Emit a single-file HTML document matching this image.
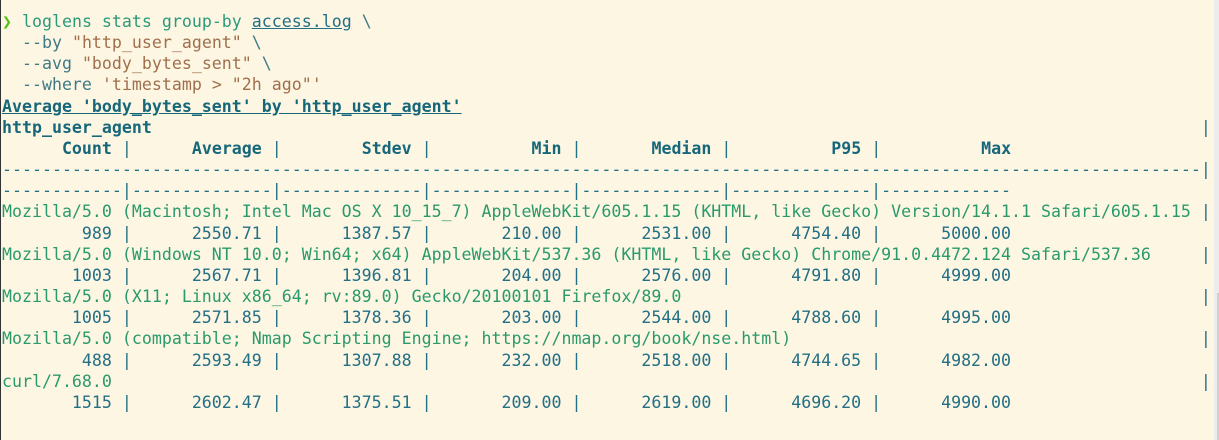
<!DOCTYPE html>
<html><head><meta charset="utf-8"><style>
html,body{margin:0;padding:0;}
body{width:1219px;height:440px;background:#fdf6e3;position:relative;overflow:hidden;border-left:1px solid #333;box-sizing:border-box;}
pre{margin:0;position:absolute;left:1px;top:11px;font-family:"DejaVu Sans Mono","Liberation Mono",monospace;font-size:16.6px;line-height:21.15px;color:#1f6f80;white-space:pre;}
.g{color:#2a9a6c}.p{color:#4fc414}.c{color:#2b9a7a}.s{color:#a06f4c}.o{color:#3f7a86}
.b{font-weight:bold;color:#17677a}.u{text-decoration:underline}
.n{color:#236f85}
#sb{position:absolute;left:1213px;top:0;width:6px;height:440px;background:#ececec}
#th{position:absolute;left:1216px;top:293px;width:3px;height:147px;background:#cfcfcf}
</style></head><body>
<pre><span class="p">❯</span> <span class="c">loglens stats group-by</span> <span class="n u">access.log</span> <span class="o">\</span>
  <span class="o">--by</span> <span class="s">"http_user_agent"</span> <span class="o">\</span>
  <span class="o">--avg</span> <span class="s">"body_bytes_sent"</span> <span class="o">\</span>
  <span class="o">--where</span> <span class="s">'timestamp &gt; "2h ago"'</span>
<span class="b u">Average 'body_bytes_sent' by 'http_user_agent'</span>
<span class="b">http_user_agent</span>                                                                                                         <span class="n">|</span>
<span class="b">      Count</span> <span class="n">|</span><span class="b">      Average</span> <span class="n">|</span><span class="b">        Stdev</span> <span class="n">|</span><span class="b">          Min</span> <span class="n">|</span><span class="b">       Median</span> <span class="n">|</span><span class="b">          P95</span> <span class="n">|</span><span class="b">          Max</span>
<span class="n">------------------------------------------------------------------------------------------------------------------------|</span>
<span class="n">------------|--------------|--------------|--------------|--------------|--------------|-------------</span>
<span class="g">Mozilla/5.0 (Macintosh; Intel Mac OS X 10_15_7) AppleWebKit/605.1.15 (KHTML, like Gecko) Version/14.1.1 Safari/605.1.15</span> <span class="n">|</span>
<span class="n">        989 |      2550.71 |      1387.57 |       210.00 |      2531.00 |      4754.40 |      5000.00</span>
<span class="g">Mozilla/5.0 (Windows NT 10.0; Win64; x64) AppleWebKit/537.36 (KHTML, like Gecko) Chrome/91.0.4472.124 Safari/537.36</span>     <span class="n">|</span>
<span class="n">       1003 |      2567.71 |      1396.81 |       204.00 |      2576.00 |      4791.80 |      4999.00</span>
<span class="g">Mozilla/5.0 (X11; Linux x86_64; rv:89.0) Gecko/20100101 Firefox/89.0</span>                                                    <span class="n">|</span>
<span class="n">       1005 |      2571.85 |      1378.36 |       203.00 |      2544.00 |      4788.60 |      4995.00</span>
<span class="g">Mozilla/5.0 (compatible; Nmap Scripting Engine; https://nmap.org/book/nse.html)</span>                                         <span class="n">|</span>
<span class="n">        488 |      2593.49 |      1307.88 |       232.00 |      2518.00 |      4744.65 |      4982.00</span>
<span class="g">curl/7.68.0</span>                                                                                                             <span class="n">|</span>
<span class="n">       1515 |      2602.47 |      1375.51 |       209.00 |      2619.00 |      4696.20 |      4990.00</span></pre>
<div id="sb"></div><div id="th"></div>
</body></html>
